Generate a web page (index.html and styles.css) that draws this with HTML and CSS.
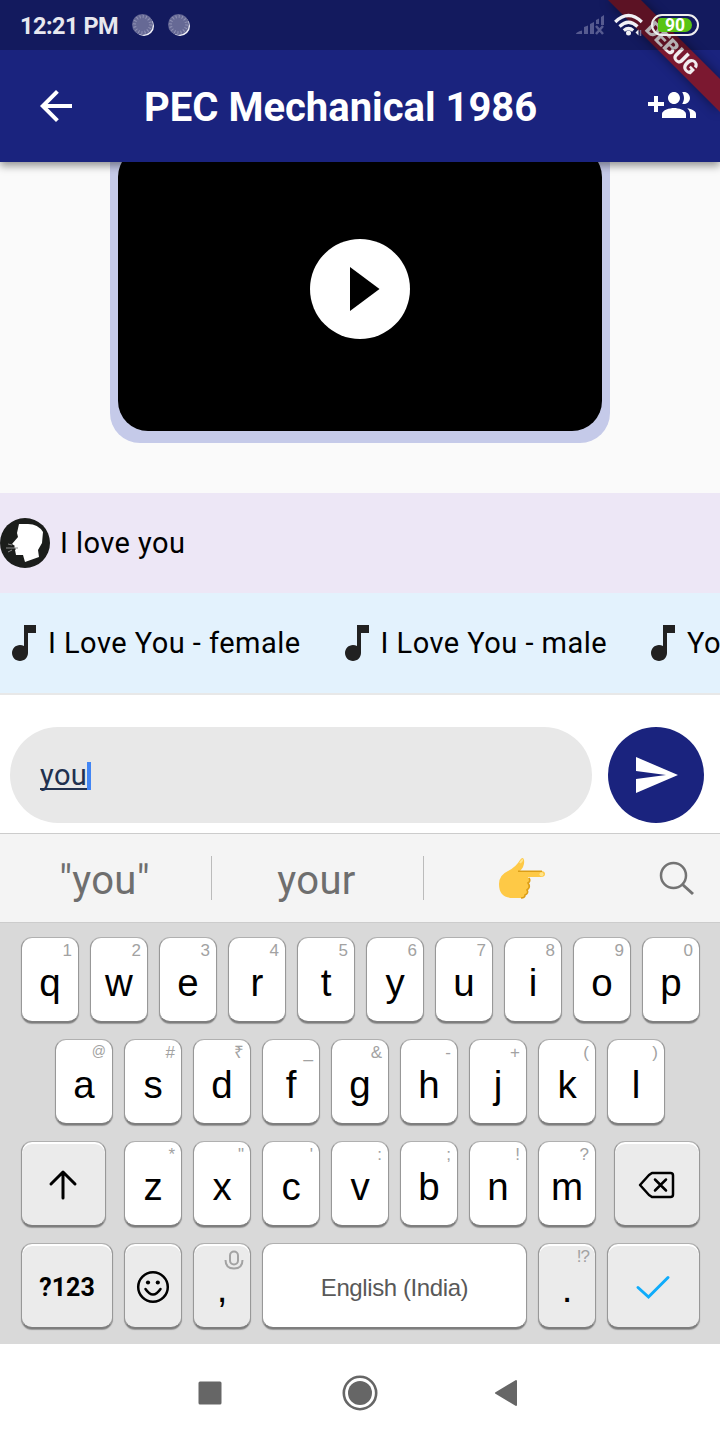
FILE: index.html
```html
<!DOCTYPE html>
<html lang="en">
<head>
<meta charset="utf-8">
<title>PEC Mechanical 1986</title>
<link rel="stylesheet" href="styles.css">
</head>
<body>
<div class="screen">
  <header class="top">
    <svg class="banner" width="120" height="120" viewBox="600 0 120 120">
      <polygon class="ribbon" points="608,0 641,0 720,79 720,112"/>
      <text class="ribbon-text" x="672" y="55" text-anchor="middle" transform="rotate(45 672 48)">DEBUG</text>
    </svg>
    <div class="status">
      <span class="clock">12:21 PM</span>
      <svg class="dot" width="24" height="24" viewBox="0 0 24 24"><circle cx="13" cy="13" r="10" fill="#f4f4fa"/><circle cx="11.500" cy="11.500" r="10.500" fill="#666995"/><circle cx="11.500" cy="11.500" r="8" fill="none" stroke="#9092b4" stroke-width="3" stroke-dasharray="1 2.140"/></svg>
      <svg class="dot" width="24" height="24" viewBox="0 0 24 24"><circle cx="13" cy="13" r="10" fill="#f4f4fa"/><circle cx="11.500" cy="11.500" r="10.500" fill="#666995"/><circle cx="11.500" cy="11.500" r="8" fill="none" stroke="#9092b4" stroke-width="3" stroke-dasharray="1 2.140"/></svg>
      <div class="status-right">
        <svg width="30" height="22" viewBox="0 0 30 22"><g fill="#575b90"><path d="M0 20q0-2 6-3.500V20zM8 13l4-1.500V20H8zM14 10l4-2v12h-4zM20 6l3-1.500V10h-3zM25 3l3-2v10h-3z"/></g><path d="M20 12l7 8M27 12l-7 8" stroke="#575b90" stroke-width="2.500"/></svg>
        <svg class="wifi" width="30" height="24" viewBox="0 0 30 24"><g fill="none" stroke="#f0f0f5" stroke-width="3.200"><path d="M1.200 9Q14.500-4 27.800 9"/><path d="M5.500 13.500Q14.500 5 23.500 13.500"/><path d="M9.800 17.500Q14.500 13.500 19.200 17.500"/></g><circle cx="14.500" cy="20" r="2.500" fill="#f0f0f5"/><path d="M21.500 19.500l3-3v6z" fill="#f0f0f5"/><path d="M26.500 17v6" stroke="#777298" stroke-width="1.500"/></svg>
        <div class="battery"><span>90</span></div>
      </div>
    </div>
    <div class="appbar">
      <svg width="48" height="48" viewBox="0 0 24 24" fill="#fff"><path d="M20 11H7.830l5.590-5.590L12 4l-8 8 8 8 1.410-1.410L7.830 13H20v-2z"/></svg>
      <h1>PEC Mechanical 1986</h1>
      <svg class="add" width="48" height="48" viewBox="0 0 24 24" fill="#fff"><path d="M8 10H5V7H3v3H0v2h3v3h2v-3h3v-2zm10 1c1.660 0 2.990-1.340 2.990-3S19.660 5 18 5c-.32 0-.63.050-.91.140.57.810.9 1.790.9 2.860s-.34 2.040-.9 2.860c.28.090.59.140.91.140zm-5 0c1.660 0 2.990-1.340 2.990-3S14.660 5 13 5c-1.660 0-3 1.340-3 3s1.340 3 3 3zm6.620 2.160c.83.730 1.380 1.660 1.380 2.840v2h3v-2c0-1.540-2.370-2.490-4.380-2.840zM13 13c-2 0-6 1-6 3v2h12v-2c0-2-4-3-6-3z"/></svg>
    </div>
  </header>
  <main class="chat">
    <div class="bubble"><div class="video"><div class="play"><svg width="100" height="100" viewBox="0 0 100 100"><path d="M40 28l29.500 22L40 72z"/></svg></div></div></div>
  </main>
  <div class="match">
    <svg width="50" height="50" viewBox="0 0 50 50"><circle cx="25" cy="25" r="25" fill="#1b1d1b"/><path d="M19 6h9q10 0 15 8l-1 11-4 7 1 7-14 5-2-7h-7l-1-5 1-1-2-2 1-1-3-2 6-7-1-4z" fill="#fff"/><path d="M12 27l-4-1M18 30H6M12 32l-4 2" stroke="#8c8c8c" stroke-width="1"/></svg>
    <span>I love you</span>
  </div>
  <div class="clips">
    <div class="clip"><svg width="48" height="48" viewBox="0 0 24 24"><path d="M12 3v10.550c-.59-.34-1.270-.55-2-.55-2.210 0-4 1.790-4 4s1.790 4 4 4 4-1.790 4-4V7h4V3h-6z"/></svg><span>I Love You - female</span></div>
    <div class="clip"><svg width="48" height="48" viewBox="0 0 24 24"><path d="M12 3v10.550c-.59-.34-1.270-.55-2-.55-2.210 0-4 1.790-4 4s1.790 4 4 4 4-1.790 4-4V7h4V3h-6z"/></svg><span>I Love You - male</span></div>
    <div class="clip"><svg width="48" height="48" viewBox="0 0 24 24"><path d="M12 3v10.550c-.59-.34-1.270-.55-2-.55-2.210 0-4 1.790-4 4s1.790 4 4 4 4-1.790 4-4V7h4V3h-6z"/></svg><span>Yo</span></div>
  </div>
  <div class="composer">
    <div class="field"><span class="typed">you</span><i class="caret"></i></div>
    <div class="send"><svg width="96" height="96" viewBox="0 0 96 96"><path d="M28 30l42 18-42 18V52l30-4-30-4z" fill="#fff"/></svg></div>
  </div>
  <div class="suggest">
    <span class="word">"you"</span><span class="word">your</span>
    <span class="emoji"><svg width="48" height="44" viewBox="0 0 48 44"><path d="M1 27Q1 18 10 14 18 10 22 3 25-1 26 3q1 6-4 11h21q4 0 4 3t-4 3H30q3 3 0 6 3 4-1 7 2 3-2 5 0 3-4 3H15Q1 41 1 27z" fill="#fec946"/><path d="M20 14.300h24M31 21q2 3-1 5 3 4-1 7 2 3-2 5 0 3-4 3" fill="none" stroke="#dc9e16" stroke-width="1.600"/><circle cx="43.500" cy="17.200" r="2" fill="#ffe48b"/><path d="M22 6q2-3 3-3" fill="none" stroke="#ffe48b" stroke-width="2"/></svg></span>
    <span class="search"><svg width="38" height="38" viewBox="0 0 38 38" fill="none" stroke="#737373" stroke-width="2.500"><circle cx="15.500" cy="15.500" r="12.500"/><path d="M24.500 24.500l10.500 9.500" stroke-width="3"/></svg></span>
  </div>
  <div class="keyboard">
    <div class="row">
      <div class="key"><sup>1</sup>q</div><div class="key"><sup>2</sup>w</div><div class="key"><sup>3</sup>e</div><div class="key"><sup>4</sup>r</div><div class="key"><sup>5</sup>t</div><div class="key"><sup>6</sup>y</div><div class="key"><sup>7</sup>u</div><div class="key"><sup>8</sup>i</div><div class="key"><sup>9</sup>o</div><div class="key"><sup>0</sup>p</div>
    </div>
    <div class="row home">
      <div class="key"><sup class="at">@</sup>a</div><div class="key"><sup>#</sup>s</div><div class="key"><sup>₹</sup>d</div><div class="key"><sup>_</sup>f</div><div class="key"><sup>&amp;</sup>g</div><div class="key"><sup>-</sup>h</div><div class="key"><sup>+</sup>j</div><div class="key"><sup>(</sup>k</div><div class="key"><sup>)</sup>l</div>
    </div>
    <div class="row">
      <div class="key fn shift"><svg width="30" height="32" viewBox="0 0 30 32" fill="none" stroke="#000" stroke-width="3" stroke-linecap="round" stroke-linejoin="round"><path d="M15 29V3M3 15L15 3l12 12"/></svg></div>
      <div class="key"><sup>*</sup>z</div><div class="key"><sup>"</sup>x</div><div class="key"><sup>'</sup>c</div><div class="key"><sup>:</sup>v</div><div class="key"><sup>;</sup>b</div><div class="key"><sup>!</sup>n</div><div class="key"><sup>?</sup>m</div>
      <div class="key fn back"><svg width="38" height="30" viewBox="0 0 38 30" fill="none" stroke="#000" stroke-width="2.500" stroke-linecap="round" stroke-linejoin="round"><path d="M14 3h18.500q2.500 0 2.500 2.500v19q0 2.500-2.500 2.500H14L11 25 2 15 11 5z"/><path d="M17 9.500l11 11M28 9.500l-11 11"/></svg></div>
    </div>
    <div class="row">
      <div class="key fn sym">?123</div>
      <div class="key fn"><svg width="34" height="34" viewBox="0 0 34 34"><circle cx="17" cy="17" r="14.800" fill="none" stroke="#000" stroke-width="2.500"/><circle cx="12" cy="12.500" r="2.100"/><circle cx="21.800" cy="12.500" r="2.100"/><path d="M9.500 19q7.500 11 15 0" fill="none" stroke="#000" stroke-width="2.500" stroke-linecap="round"/></svg></div>
      <div class="key fn punct"><svg class="mic" width="20" height="20" viewBox="0 0 20 20" fill="none" stroke="#a3a3a3" stroke-width="2"><rect x="6" y="1.500" width="8" height="13" rx="4"/><path d="M1.500 10q0 8.500 8.500 8.500t8.500-8.500"/></svg>,</div>
      <div class="key space">English (India)</div>
      <div class="key fn punct"><sup class="narrow">!?</sup>.</div>
      <div class="key fn enter"><svg width="36" height="26" viewBox="0 0 36 26" fill="none" stroke="#0facfb" stroke-width="3" stroke-linecap="round"><path d="M3 13.500L13.500 23 33 3.500"/></svg></div>
    </div>
  </div>
  <nav class="nav">
    <svg width="24" height="24" viewBox="0 0 24 24"><rect x=".5" y=".5" width="23" height="23" rx="1.500" fill="#666"/></svg>
    <svg class="home-dot" width="36" height="36" viewBox="0 0 36 36"><circle cx="18" cy="18" r="16.200" fill="none" stroke="#666" stroke-width="2.600"/><circle cx="18" cy="18" r="12" fill="#666"/></svg>
    <svg width="24" height="28" viewBox="0 0 24 28"><path d="M2 14L22 2v24z" fill="#666" stroke="#666" stroke-width="2" stroke-linejoin="round"/></svg>
  </nav>
</div>
</body>
</html>
```
FILE: styles.css
```css
* { box-sizing: border-box; }
body { margin: 0; }
svg { display: block; flex: none; }
.screen { width: 720px; height: 1440px; display: flex; flex-direction: column; overflow: hidden; background: #fff; font-family: Roboto, sans-serif; color: #000; }
.top { position: relative; z-index: 1; height: 162px; flex: none; background: #1a237e; box-shadow: 0 4px 8px rgba(0,0,0,.4); }
.banner { position: absolute; top: 0; right: 0; filter: drop-shadow(0 0 6px rgba(0,0,0,.45)); }
.ribbon { fill: #7b1830; }
.ribbon-text { fill: #f2edf0; font: 900 20.400px Roboto, sans-serif; }
.status { position: relative; height: 50px; padding: 0 21px 0 20px; display: flex; align-items: center; background: rgba(0,0,0,.25); }
.clock { width: 111px; color: #e7e8ef; font-size: 23.500px; letter-spacing: -.5px; font-weight: 700; white-space: nowrap; padding-top: 2px; }
.dot { margin-right: 12px; }
.status-right { margin-left: auto; display: flex; align-items: center; gap: 8px; }
.wifi { margin-right: -1px; }
.battery { width: 48px; height: 22px; margin-top: -1px; padding: 2px 5px; border: 2px solid #eee; border-radius: 11px; display: flex; }
.battery span { flex: 1; background: #59c415; border-radius: 3px 7px 7px 3px; color: #fff; font-size: 17.500px; font-weight: 700; line-height: 15px; text-align: center; }
.appbar { height: 112px; padding: 0 24px 0 32px; display: flex; align-items: center; }
.appbar h1 { margin: 4px 0 0 64px; color: #fff; font-size: 40px; font-weight: 700; line-height: 48px; white-space: nowrap; }
.add { margin-left: auto; }
.chat { height: 331px; flex: none; display: flex; justify-content: center; align-items: flex-end; padding-bottom: 50px; background: #fafafa; overflow: hidden; }
.bubble { width: 500px; height: 308px; flex: none; padding: 12px 8px; border-radius: 30px; background: #c5cae9; }
.video { height: 284px; display: flex; align-items: center; justify-content: center; background: #000; border-radius: 30px; }
.play { width: 100px; height: 100px; border-radius: 50%; background: #fff; }
.match { height: 100px; flex: none; display: flex; align-items: center; gap: 10px; background: #ede7f6; font-size: 29px; letter-spacing: .45px; }
.clips { height: 102px; flex: none; display: flex; align-items: center; border-bottom: 2px solid #e8e8e8; background: #e3f2fd; font-size: 29px; letter-spacing: .47px; overflow: hidden; white-space: nowrap; }
.clip { display: flex; align-items: center; margin-right: 32px; flex: none; }
.clip svg { fill: #212121; }
.composer { height: 138px; flex: none; padding: 32px 16px 10px 10px; display: flex; justify-content: space-between; }
.field { width: 582px; height: 96px; padding-left: 30px; display: flex; align-items: center; border-radius: 48px; background: #e8e8e8; color: #20304f; font-size: 29px; letter-spacing: .4px; }
.typed { text-decoration: underline; text-decoration-thickness: 1.500px; text-underline-offset: 3px; text-decoration-skip-ink: none; }
.caret { width: 4px; height: 28px; margin-top: 2px; background: #4285f4; }
.send { width: 96px; height: 96px; border-radius: 50%; background: #1a237e; }
.suggest { height: 90px; flex: none; display: flex; align-items: center; border-top: 1px solid #ccc; border-bottom: 1px solid #ccc; background: #f4f4f4; color: #6e6e6e; font-size: 40px; }
.word { width: 212px; height: 44px; border-right: 1px solid #bbb; display: flex; align-items: center; justify-content: center; padding: 5px 2px 0 0; letter-spacing: .3px; }
.emoji { width: 196px; display: flex; justify-content: center; padding-top: 2px; }
.search { margin-left: auto; margin-right: 24px; padding-top: 2px; }
.keyboard { height: 421px; flex: none; padding: 14px 20px 0 21px; display: flex; flex-direction: column; gap: 16px; background: #d9d9d9; font-family: "Liberation Sans", Arial, sans-serif; }
.row { display: flex; gap: 11px; }
.home { padding-left: 34px; }
.key { position: relative; width: 58px; height: 86px; flex: none; display: flex; align-items: center; justify-content: center; padding-top: 7px; font-size: 38.500px; background: #fff; border: 1px solid #989898; border-top-color: #b0b0b0; border-bottom: 2px solid #7e7e7e; border-radius: 11px; box-shadow: 0 1px 1px #999; }
.key sup { position: absolute; top: 3px; right: 6px; color: #a2a2a2; font-size: 17px; line-height: 20px; }
.key .at { font-size: 14px; line-height: 17px; }
.key .narrow { letter-spacing: -1px; }
.fn { background: #ebebeb; box-shadow: 0 1px 1px #999, inset 0 2px 0 #fff; padding-top: 3px; }
.shift { width: 85px; margin-right: 7px; padding-right: 2px; }
.back { width: 86px; margin-left: 7px; }
.sym { width: 92px; font: 700 25px Roboto, sans-serif; }
.punct { padding-top: 7px; }
.mic { position: absolute; top: 6px; right: 6px; }
.space { width: 265px; color: #595959; font-size: 24px; letter-spacing: -.4px; padding-top: 5px; }
.enter { width: 93px; padding-right: 1px; }
.nav { height: 96px; flex: none; padding: 1px 202px 0 198px; display: flex; align-items: center; justify-content: space-between; background: #fff; }
.home-dot { margin-left: 3px; }
```
